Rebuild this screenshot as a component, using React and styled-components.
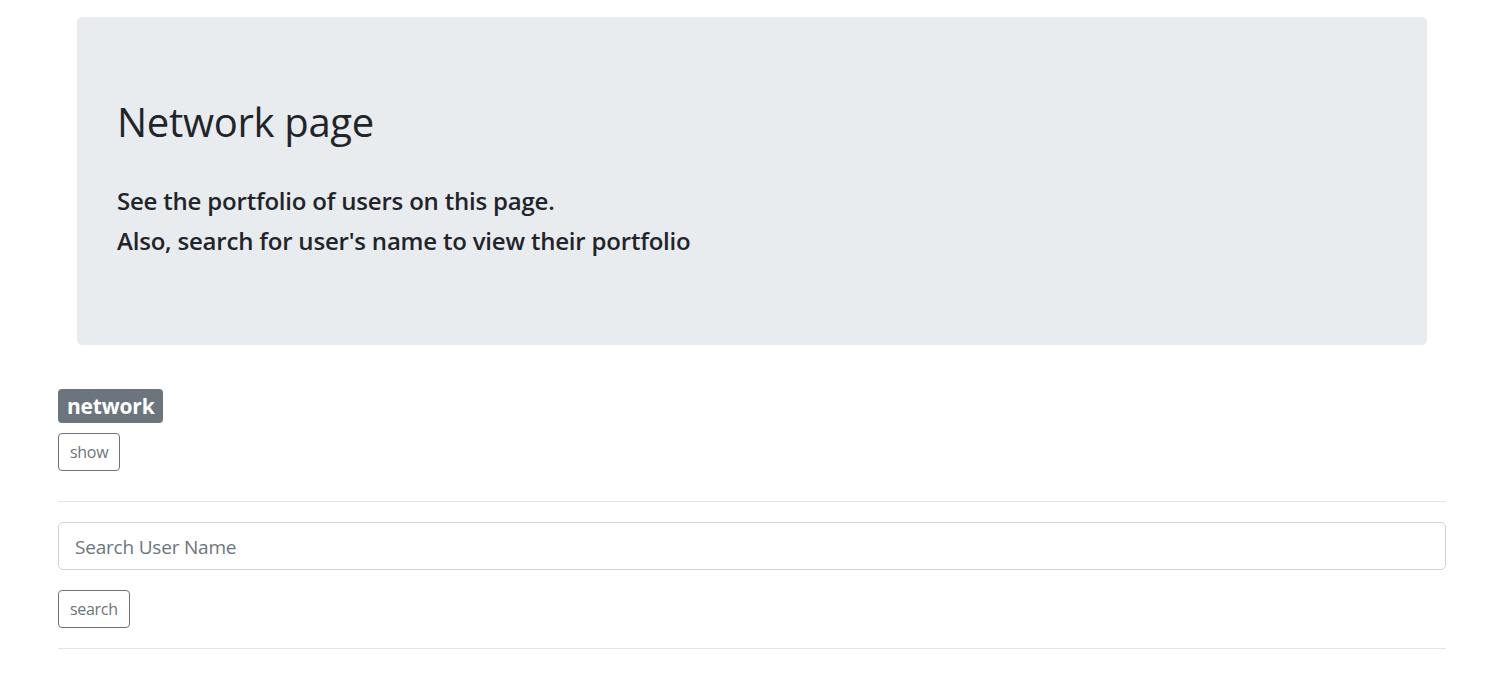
import React from "react";
import styled, { createGlobalStyle } from "styled-components";

const GlobalStyle = createGlobalStyle`
  html, body {
    margin: 0;
    padding: 0;
    background: #ffffff;
    font-family: "Open Sans", "Noto Sans", Arial, sans-serif;
    color: #212529;
  }
  * { box-sizing: border-box; }
`;

const Page = styled.div`
  padding: 17px 58px 0;
  display: flex;
  flex-direction: column;
`;

const Jumbotron = styled.section`
  margin: 0 19px;
  height: 328px;
  background: #e9ecef;
  border-radius: 5px;
  padding: 79px 40px 0;
  display: flex;
  flex-direction: column;
`;

const Title = styled.h1`
  margin: 0 0 33px;
  font-size: 40px;
  line-height: 52px;
  font-weight: 500;
  letter-spacing: -0.3px;
`;

const Lead = styled.p`
  margin: 0;
  font-size: 24px;
  line-height: 40px;
  font-weight: 600;
  letter-spacing: -0.2px;
`;

const Section = styled.div`
  display: flex;
  flex-direction: column;
  align-items: flex-start;
  gap: ${(p) => p.$gap || 0}px;
  padding-top: ${(p) => p.$top || 0}px;
`;

const Badge = styled.span`
  display: inline-block;
  background: #6c757d;
  color: #ffffff;
  font-weight: 700;
  font-size: 21px;
  line-height: 22px;
  padding: 6px 9px;
  border-radius: 4px;
  letter-spacing: -0.2px;
`;

const OutlineButton = styled.button`
  font-family: inherit;
  font-size: 16px;
  line-height: 24px;
  padding: 6px 11px;
  color: #6c757d;
  background: transparent;
  border: 1px solid #6c757d;
  border-radius: 4px;
  font-weight: 400;
  letter-spacing: -0.3px;
  cursor: pointer;
`;

const Rule = styled.hr`
  width: 100%;
  margin: ${(p) => p.$mt || 0}px 0 0;
  border: 0;
  border-top: 1px solid rgba(0, 0, 0, 0.1);
`;

const SearchInput = styled.input`
  width: 100%;
  height: 48px;
  padding: 10px 16px 8px;
  font-family: inherit;
  font-size: 19px;
  color: #495057;
  border: 1px solid #ced4da;
  border-radius: 5px;
  outline: none;
  letter-spacing: -0.2px;
  &::placeholder {
    color: #6c757d;
  }
`;

export default function App() {
  return (
    <>
      <GlobalStyle />
      <Page>
        <Jumbotron>
          <Title>Network page</Title>
          <Lead>See the portfolio of users on this page.</Lead>
          <Lead>Also, search for user's name to view their portfolio</Lead>
        </Jumbotron>
        <Section $top={44} $gap={10}>
          <Badge>network</Badge>
          <OutlineButton>show</OutlineButton>
        </Section>
        <Rule $mt={30} />
        <Section $top={20} $gap={20}>
          <SearchInput placeholder="Search User Name" />
          <OutlineButton>search</OutlineButton>
        </Section>
        <Rule $mt={20} />
      </Page>
    </>
  );
}
